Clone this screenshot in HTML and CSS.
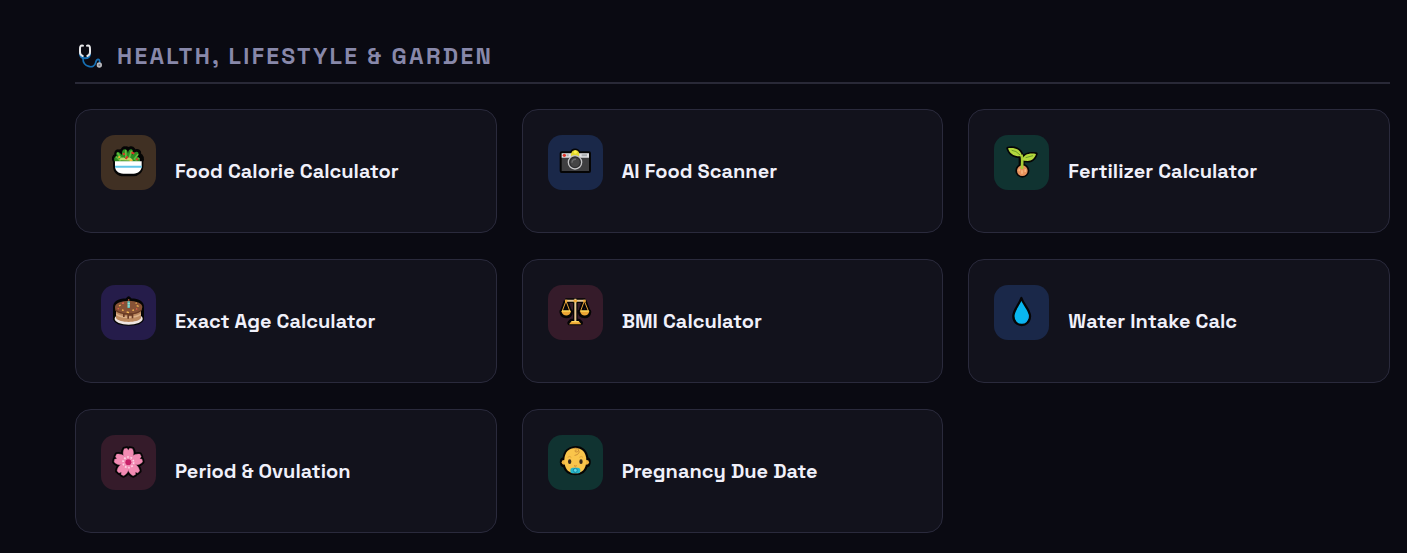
FILE: index.html
```html
<!DOCTYPE html>
<html lang="en">
<head>
<meta charset="utf-8">
<title>Health, Lifestyle &amp; Garden</title>
<link rel="stylesheet" href="styles.css">
</head>
<body>
<main class="section">
  <h2 class="section-title">
    <svg class="title-icon" viewBox="0 0 78 78" fill="none" aria-hidden="true">
      <path d="M15 38v9c0 24 34 34 38 12 2-12 12-14 12-2v5" stroke="#1670b5" stroke-width="5"/>
      <path d="M6 30c0 12 7 16 15 16s15-4 15-16" stroke="#1670b5" stroke-width="6"/>
      <path d="M15 8c-8-2-9 4-9 10v10c0 5 3 9 8 11M27 8c8-2 9 4 9 10v10c0 5-3 9-8 11" stroke="#e8e8ea" stroke-width="6" stroke-linecap="round"/>
      <circle cx="64" cy="66" r="8" fill="#b8b8bc"/>
      <circle cx="64" cy="66" r="3" fill="#77777e"/>
    </svg>
    <span>HEALTH, LIFESTYLE &amp; GARDEN</span>
  </h2>
  <nav class="grid" aria-label="Health, lifestyle and garden tools">
    <a class="card" href="#food">
      <svg class="tile amber" viewBox="9 9 165 165" aria-hidden="true">
        <path d="M51 88c-6-8-4-15 4-18-2-8 1-14 9-11 4-2 6-1 8 3 0-10 5-15 12-13 3 0 6 2 7 5 4-6 11-7 15-1l2 9c4-6 12-7 15-2l1 9c8 2 10 12 6 20v13c0 15-11 25-25 25H77c-16 0-26-10-26-25z" stroke="#050505" stroke-width="12" stroke-linejoin="round"/>
        <path d="M51 90c-5-9-3-15 5-18-3-9 1-14 7-11l9 8c-1-11 2-17 9-17 5 0 7 4 9 12 1-9 5-13 10-12 6 1 6 9 3 17 6-9 13-12 17-8 4 5 0 10-3 14 8 0 11 7 8 15z" fill="#2d8b24"/>
        <path d="m59 64 12 17m12-25 1 22m16-20-6 20m25-10-10 13m13-2-8 5M55 75l11 10" stroke="#63bd3e" stroke-width="5" stroke-linecap="round"/>
        <path d="M64 85c0-9 13-12 19-5 8-7 17-4 22 6z" fill="#b8d665"/>
        <path d="m76 63 3 6m4 12 6-8m11-12 9 4m6 16 5 2" stroke="#df3529" stroke-width="6"/>
        <path d="m61 75 5 1m29 11 8-2" stroke="#f4b832" stroke-width="6"/>
        <path d="M51 88h80v14c0 14-11 23-24 23H76c-15 0-25-9-25-23z" fill="#fff"/>
        <path d="M51 101h80v6H51z" fill="#62c6e8"/>
      </svg>
      <h3 class="label">Food Calorie Calculator</h3>
    </a>
    <a class="card" href="#scanner">
      <svg class="tile blue" viewBox="9 9 165 165" aria-hidden="true">
        <path d="M50 64h30c3-11 17-11 21 0h31v53H50z" fill="#050505" stroke="#050505" stroke-width="12" stroke-linejoin="round"/>
        <rect x="50" y="64" width="82" height="53" fill="#3e3e40"/>
        <path d="M50 64h82v13H50z" fill="#dedee1"/>
        <path d="M78 75c-2-10 3-21 13-20 10-1 14 9 11 20z" fill="#e1d72f"/>
        <circle cx="91" cy="60" r="5" fill="#fff34b"/>
        <circle cx="58" cy="70" r="5" fill="#df3329"/>
        <path d="M65 67h6v6h-6zm45 0h16v6h-16z" fill="#aaaeb1"/>
        <circle cx="90" cy="91" r="20" fill="#2d2d2f" stroke="#c5c5c7" stroke-width="4"/>
        <circle cx="90" cy="91" r="14" fill="#454546"/>
        <path d="M81 92c0-7 5-11 12-10" fill="none" stroke="#6c6c6e" stroke-width="4"/>
      </svg>
      <h3 class="label">AI Food Scanner</h3>
    </a>
    <a class="card" href="#fertilizer">
      <svg class="tile green" viewBox="9 9 165 165" aria-hidden="true">
        <g stroke="#050505" stroke-width="10" stroke-linejoin="round">
          <path d="M51 49c20-4 39 4 42 23-17 3-36-2-42-23zm43 34c4-15 20-21 41-17-6 20-22 25-41 17z"/>
          <path d="M92 67v40" stroke-width="18"/><circle cx="94" cy="116" r="16"/>
        </g>
        <circle cx="94" cy="116" r="16" fill="#e8925c"/>
        <path d="M85 110v8m18-7v9m-10-5v10" stroke="#f8b57e" stroke-width="5"/>
        <path d="M91 69c5 9 2 20 2 42m1-28 11-3" fill="none" stroke="#a7cc35" stroke-width="8"/>
        <path d="M51 49c20-4 39 4 42 23-17 3-36-2-42-23zm43 34c4-15 20-21 41-17-6 20-22 25-41 17z" fill="#b3d83e"/>
        <path d="M62 55q13 0 25 14m17 8 22-6" fill="none" stroke="#6d9c28" stroke-width="3"/>
      </svg>
      <h3 class="label">Fertilizer Calculator</h3>
    </a>
    <a class="card" href="#age">
      <svg class="tile purple" viewBox="9 9 165 165" aria-hidden="true">
        <path d="M51 76c0-15 17-20 35-21l6-6 6 6c20 1 34 8 34 21v36c-8 19-74 17-81-1z" fill="#050505" stroke="#050505" stroke-width="12" stroke-linejoin="round"/>
        <ellipse cx="92" cy="110" rx="42" ry="18" fill="#f0e6e2"/>
        <path d="M54 77v31c8 15 66 16 75 0V77z" fill="#bd8a60"/>
        <path d="M54 94c20 13 56 13 75 0v5c-20 13-56 13-75 0z" fill="#dcb189"/>
        <path d="M51 75v10c5 7 14 9 24 11v9h5v-7h8v12h5v-9h8v8h5v-12c12-2 22-6 26-13V75z" fill="#6a3b24"/>
        <ellipse cx="92" cy="75" rx="41" ry="19" fill="#875236"/>
        <path d="M92 58v20" stroke="#5ac6c0" stroke-width="7"/>
        <path d="M89 65h7m-7 7h7" stroke="#d8ede0" stroke-width="2"/>
        <path d="M92 51v6" stroke="#8c4b30" stroke-width="4"/>
        <path d="m63 72 5-3m4 15 5 1m9 5 7 2m10-7 5-1m8-13 6 2m-9-10 3 1" stroke="#f2b653" stroke-width="4"/>
        <path d="m72 64 6-1m-19 16 4 2m51-1 4 2" stroke="#df604b" stroke-width="4"/>
      </svg>
      <h3 class="label">Exact Age Calculator</h3>
    </a>
    <a class="card" href="#bmi">
      <svg class="tile red" viewBox="9 9 165 165" aria-hidden="true">
        <g stroke="#050505" stroke-width="14" stroke-linejoin="round" fill="none">
          <path d="M61 56h60M91 50v71M74 123h33l-6-6H80zM63 57 51 91m12-34 12 34m43-34-12 34m12-34 13 34M50 89h27c-2 17-24 17-27 0zm55 0h27c-2 17-24 17-27 0z"/>
        </g>
        <path d="m63 57-12 32m12-32 12 32m43-32-12 32m12-32 13 32" fill="none" stroke="#e9a33b" stroke-width="3"/>
        <path d="M61 56h60M91 50v67" stroke="#e9c993" stroke-width="6"/>
        <path d="M86 53h10v8H86zm-26 0h7v7h-7zm55 0h7v7h-7zM80 117h21l8 10H72zM49 87h29c-2 18-26 18-29 0zm56 0h28c-2 18-26 18-28 0z" fill="#eca633"/>
        <path d="M51 87h25m31 0h24M80 119h21" stroke="#ffd75b" stroke-width="4"/>
      </svg>
      <h3 class="label">BMI Calculator</h3>
    </a>
    <a class="card" href="#water">
      <svg class="tile blue" viewBox="9 9 165 165" aria-hidden="true">
        <path d="M91 48c-6 20-24 36-24 54 0 36 50 36 50 0 0-18-20-35-26-54z" fill="#09b7f0" stroke="#050505" stroke-width="7" stroke-linejoin="round"/>
        <path d="M111 98c1 13-5 22-17 24" fill="none" stroke="#14aaf0" stroke-width="4"/>
      </svg>
      <h3 class="label">Water Intake Calc</h3>
    </a>
    <a class="card" href="#period">
      <svg class="tile red" viewBox="9 12 165 165" aria-hidden="true">
        <defs>
          <path id="petal" d="M91 94C77 84 71 66 79 53l8-1 4 6 4-6 8 1c8 13 2 31-12 41z"/>
          <g id="bloom">
            <use href="#petal"/><use href="#petal" transform="rotate(72 91 94)"/><use href="#petal" transform="rotate(144 91 94)"/><use href="#petal" transform="rotate(216 91 94)"/><use href="#petal" transform="rotate(288 91 94)"/>
          </g>
        </defs>
        <use href="#bloom" stroke="#050505" stroke-width="12" stroke-linejoin="round"/>
        <use href="#bloom" fill="#f38bb3" stroke="#e77fa9" stroke-width="1"/>
        <circle cx="91" cy="94" r="16" fill="none" stroke="#ffd4e6" stroke-width="5" stroke-dasharray="5 5"/>
        <path d="M91 82v24M79 90l24 8M83 104l16-20M83 84l16 20M79 98l24-8" stroke="#f9a0c6" stroke-width="3"/>
        <circle cx="91" cy="94" r="9" fill="#c72168"/>
      </svg>
      <h3 class="label">Period &amp; Ovulation</h3>
    </a>
    <a class="card" href="#pregnancy">
      <svg class="tile green" viewBox="9 12 165 165" aria-hidden="true">
        <path d="M58 83c1-21 15-31 33-33s33 12 34 33c10 1 10 20-1 21-5 17-18 24-33 24s-28-7-33-24c-11-1-12-20 0-21z" stroke="#050505" stroke-width="10" stroke-linejoin="round"/>
        <circle cx="57" cy="94" r="7" fill="#efb340"/><circle cx="125" cy="94" r="7" fill="#efb340"/>
        <path d="M58 87c0-23 14-36 33-36s33 13 33 36c0 28-13 40-33 40s-33-12-33-40z" fill="#fac54b"/>
        <path d="M87 52c17-4 17 12 6 11-5-1-4-7 1-6m6 0c7 8-1 14-10 16" fill="none" stroke="#cb8d35" stroke-width="3" stroke-linecap="round"/>
        <path d="M68 79q6-5 11 0m24 0q6-5 11 0" fill="none" stroke="#e3a63b" stroke-width="3"/>
        <ellipse cx="74" cy="92" rx="5" ry="7" fill="#38271c"/><ellipse cx="108" cy="92" rx="5" ry="7" fill="#38271c"/>
        <path d="M87 104q4 3 8 0" fill="none" stroke="#cc7e2c" stroke-width="3"/>
        <rect x="76" y="110" width="30" height="17" rx="8" fill="#25b6ca"/>
        <circle cx="91" cy="118" r="6" fill="#58d9e5" stroke="#1687a5" stroke-width="3"/>
      </svg>
      <h3 class="label">Pregnancy Due Date</h3>
    </a>
  </nav>
</main>
</body>
</html>
```
FILE: styles.css
```css
* { box-sizing: border-box; }
body {
  margin: 0;
  background: #0a0a12;
  color: #f0f0fa;
  font-family: "Space Grotesk", Inter, sans-serif;
}
.section { padding: 40px 17px 19px 75px; }
.section-title {
  display: flex;
  align-items: center;
  gap: 13px;
  margin: 0 0 25px;
  padding: 0 0 10px 3px;
  border-bottom: 2px solid #292937;
  color: #8888aa;
  font-size: 23px;
  font-weight: 700;
  line-height: 32px;
  letter-spacing: 0.1em;
}
.title-icon { width: 26px; height: 26px; }
.grid {
  display: grid;
  grid-template-columns: repeat(3, 1fr);
  gap: 26px 25px;
}
.card {
  display: flex;
  align-items: center;
  gap: 19px;
  min-height: 124px;
  padding: 25px;
  background: #12121c;
  border: 1px solid #2a2a3c;
  border-radius: 16px;
  color: inherit;
  text-decoration: none;
}
.tile {
  flex: none;
  align-self: flex-start;
  width: 55px;
  height: 55px;
  border-radius: 14px;
}
.amber { background: #403023; }
.blue { background: #1a2849; }
.green { background: #103331; }
.purple { background: #251c4a; }
.red { background: #351b2a; }
.label {
  margin: 0;
  font-size: 20px;
  font-weight: 600;
  line-height: 26px;
}
```
